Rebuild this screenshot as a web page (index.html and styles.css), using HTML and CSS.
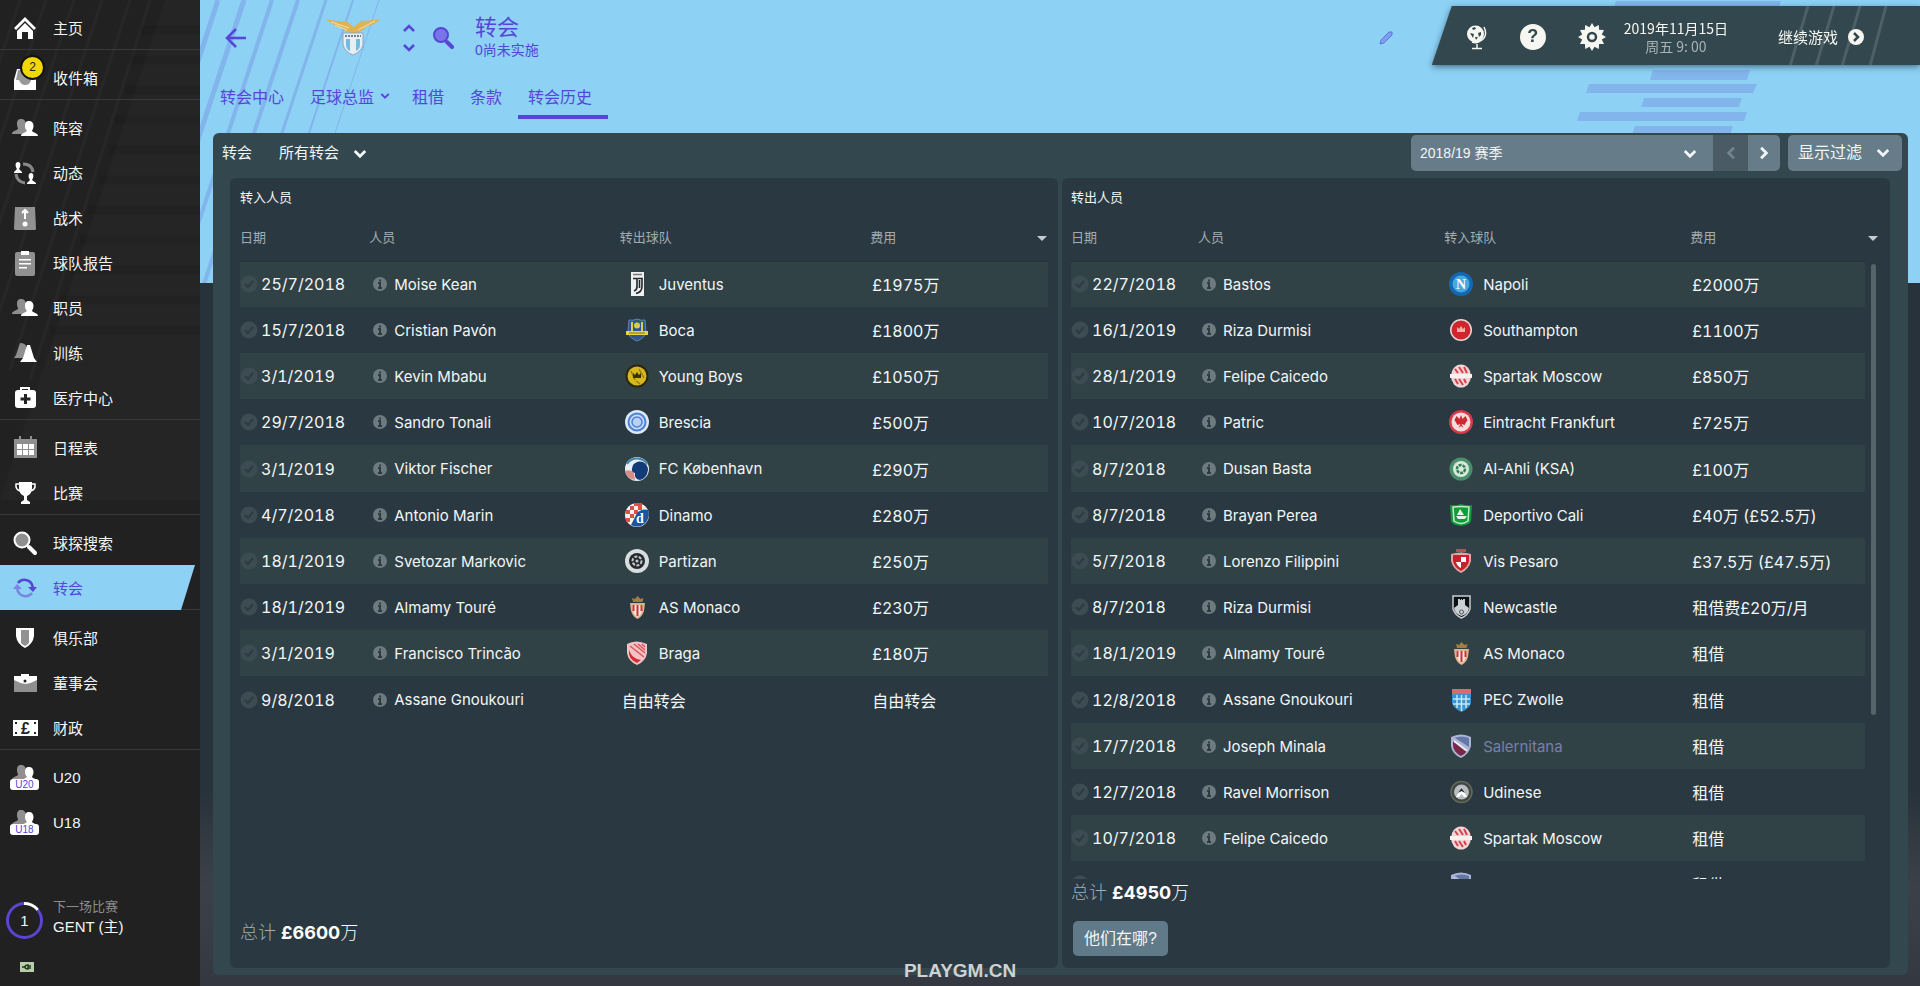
FILE: index.html
```html
<!DOCTYPE html>
<html lang="zh-CN">
<head>
    <meta charset="UTF-8">
    <meta name="viewport" content="width=device-width, initial-scale=1.0">
    <title>转会历史</title>
    <link rel="stylesheet" href="styles.css">
</head>
<body>
    <!-- Shared icons and club badges -->
    <svg class="sprite" aria-hidden="true">
        <symbol id="chevron" viewBox="0 0 12 12"><path d="M1.500 3.500 6 8l4.500-4.500" fill="none" stroke="currentColor" stroke-width="2.400"/></symbol>
        <symbol id="people" viewBox="0 0 28 28">
            <path d="M10 5c-3 0-4 2-4 5s1 3 1 5c-3 2-6 2-6 5h14V10c0-3-2-5-5-5z" fill="#8f8f8f"/>
            <path d="M18 7c3 0 4.500 2 4.500 5s-1.500 4-1.500 5c2 2 6 2 6 5H10c0-3 4-3 5.500-5 0-1-1.500-2-1.500-5s1-5 4-5z" fill="#fff"/>
        </symbol>
        <symbol id="check" viewBox="0 0 18 18"><circle cx="9" cy="9" r="8.500" fill="#3d4c52"/><path d="m5 9 3 3 5-6" fill="none" stroke="#2e3b41" stroke-width="2"/></symbol>
        <symbol id="info" viewBox="0 0 14 14"><circle cx="7" cy="7" r="7" fill="#6d7a80"/><path d="M7 2.500v2M5 6h2v5M5 11h4" fill="none" stroke="#2d3b42" stroke-width="2"/></symbol>

        <symbol id="juventus" viewBox="0 0 24 24"><path d="M6 0h13v24H6z" fill="#eef1f1"/><path d="M8 2.500h9" stroke="#777" stroke-width="1.500"/><path d="M8 6.500h4v8c0 3-1 4-3 4.500M13 6.500h4v8c0 4-2 6-6 7M14.500 8v8" fill="none" stroke="#20262a" stroke-width="1.600"/></symbol>
        <symbol id="boca" viewBox="0 0 24 24"><path d="M4 2q4 1 8-1 4 2 8 1l1 12q-1 6-9 9-8-3-9-9z" fill="#31558f" stroke="#6288a8"/><path d="M7 4v9M17 4v9" stroke="#d7cf44" stroke-width="2"/><circle cx="12" cy="7.500" r="3" fill="#d7cf44"/><path d="M1 13h22v4H1z" fill="#e4d745"/><path d="M4 15h16" stroke="#77752b"/></symbol>
        <symbol id="youngboys" viewBox="0 0 24 24"><circle cx="12" cy="12" r="11.500" fill="#2c260d"/><circle cx="12" cy="12" r="9.500" fill="#d8b81c"/><path d="m6 7 4 9M14 5l5 9M11 17l4 3" stroke="#93801a" stroke-width="1.500"/><path d="m8 9 2 2 2-3 2 3 2-2v5H8z" fill="#3a320d"/></symbol>
        <symbol id="brescia" viewBox="0 0 24 24"><circle cx="12" cy="12" r="12" fill="#dce9f9"/><circle cx="12" cy="12" r="8.500" fill="#c4daf8" stroke="#4f82d4" stroke-width="2"/><circle cx="12" cy="12" r="5" fill="#b9d2f4" stroke="#4f82d4" stroke-width="1.500"/></symbol>
        <symbol id="kobenhavn" viewBox="0 0 24 24"><circle cx="12" cy="12" r="12" fill="#e7eff4"/><path d="M2 7Q6 1 13 1.500q7 1 9 6" fill="none" stroke="#3f82ad" stroke-width="2"/><path d="M8 8q4-5 10-3 5 3 5 8-1 8-8 10-6-1-5-7-5 0-2-8z" fill="#123c78"/><path d="M0 14q6-2 9 2l1 7q-8-1-10-9z" fill="#d98c8a"/></symbol>
        <symbol id="dinamo" viewBox="0 0 24 24"><circle cx="12" cy="12" r="12" fill="#f5f1ee"/><path d="M5 3h4v4H5zM13 0h4v3h-4zM9 7h4v4H9zM1 7h4v4H1zM13 3h4v4h-4zM5 11h4v4H5zM1 15h4v4H1zM17 7h4v4h-4zM9 0h4v3H9z" fill="#de4f44"/><path d="M23 7a12 12 0 0 1-17 15l6-12q5-5 11-3z" fill="#1b559e"/><text x="11" y="19.500" class="badge-letter" fill="#fff">d</text></symbol>
        <symbol id="partizan" viewBox="0 0 24 24"><circle cx="12" cy="12" r="12" fill="#d9dddf"/><circle cx="12" cy="12" r="8" fill="#24292c"/><circle cx="12" cy="12" r="4.500" fill="none" stroke="#c5cccf" stroke-width="2" stroke-dasharray="3 1.500"/><circle cx="12" cy="12" r="1.500" fill="#c5cccf"/></symbol>
        <symbol id="monaco" viewBox="0 0 24 24"><path d="m8 7-1-4 3 1 2.500-3 3 3 3-1-1 4z" fill="#a67c43"/><path d="M5 8h15l-1 8q-2 6-6.500 8Q8 22 6 16z" fill="#dfb28c"/><path d="M7 10h11l-1 6q-1 4-4.500 6Q9 20 8 16z" fill="#f6e7df"/><path d="M8.500 10v6M12.500 10v11M16.500 10v6" stroke="#c7333c" stroke-width="2"/></symbol>
        <symbol id="braga" viewBox="0 0 24 24"><path d="M2 3q9-5 20 0v9q-1 8-10 12Q3 20 2 12z" fill="#f2c3c5"/><path d="M4 9q3 9 12 10l-4 3q-7-3-8-9z" fill="#d92b32"/><path d="m9 3 11 9M13 3l7 6M17 3l3 3M5 5l14 11" stroke="#dd5158" stroke-width="1.500"/></symbol>
        <symbol id="napoli" viewBox="0 0 24 24"><circle cx="12" cy="12" r="12" fill="#1368b4"/><circle cx="12" cy="12" r="8.500" fill="#4ba8de"/><text x="7" y="16.500" class="badge-letter" fill="#fff">N</text></symbol>
        <symbol id="southampton" viewBox="0 0 24 24"><circle cx="12" cy="12" r="11" fill="#f0d5d5"/><circle cx="12" cy="12" r="9.500" fill="#cf252d"/><path d="m8 9 2 2 2-3 2 3 2-2v5H8z" fill="#f3b0a4"/></symbol>
        <symbol id="spartak" viewBox="0 0 24 24"><ellipse cx="12" cy="12" rx="10" ry="11.500" fill="#f2d5d7"/><path d="m6 5 3 4M10 3l4 6M15 3l3 6M6 15l3 5M10 15l4 6M15 15l2 4" stroke="#d4434d" stroke-width="2"/><path d="M1 10h22v4H1z" fill="#faf0ed"/></symbol>
        <symbol id="frankfurt" viewBox="0 0 24 24"><circle cx="12" cy="12" r="12" fill="#d83a46"/><circle cx="12" cy="12" r="9.500" fill="#f5dddd"/><path d="m12 5 1.500 4 3-3 2 4-3 5-3-1 2 4-2.500-2-2.500 2 2-4-3 1-3-5 2-4 3 3z" fill="#cf2631"/></symbol>
        <symbol id="ahli" viewBox="0 0 24 24"><circle cx="12" cy="12" r="11.500" fill="#4a8f6d"/><circle cx="12" cy="12" r="8" fill="#d5ead9"/><circle cx="12" cy="12" r="4" fill="#d5ead9" stroke="#377a5a" stroke-width="2.500" stroke-dasharray="3 1"/></symbol>
        <symbol id="cali" viewBox="0 0 24 24"><path d="M1 2q5 1 11-1 6 2 11 1l-1 16q-1 4-10 5-9-1-10-5z" fill="#129a3b"/><path d="M4 4q8-1 16 0l-1 14q-7 5-14 0z" fill="none" stroke="#c5eccb" stroke-width="1.500"/><path d="M7 13h11l-2 3H9zM11 6l4 6H8z" fill="#e2f5e2"/></symbol>
        <symbol id="pesaro" viewBox="0 0 24 24"><path d="M7 0h10v3H7z" fill="#b35358"/><path d="M2 5q10-3 20 0v7q-2 8-10 12Q4 20 2 12z" fill="#e7a3a6"/><path d="M4 6h16v6q-1 6-8 10-7-4-8-10z" fill="#c9212b"/><path d="M12 8h5v5h-5zM7 13h5v6q-4-2-5-6z" fill="#fff"/></symbol>
        <symbol id="newcastle" viewBox="0 0 24 24"><path d="M4 1h17v13q-2 6-8.500 9Q6 20 4 14z" fill="#0d1114" stroke="#c9cdd0" stroke-width="1.500"/><path d="M9 4h2v1h1V4h1v1h1V4h2v6l4 3q-1 6-7.500 8Q6 19 5 13l4-3z" fill="#cbd0d4"/><circle cx="12.500" cy="17" r="2" fill="none" stroke="#555"/></symbol>
        <symbol id="zwolle" viewBox="0 0 24 24"><path d="M3 1h19v14q-2 6-9.500 9Q5 21 3 15z" fill="#3a93cf"/><path d="M3 1h19v5H3z" fill="#d96b6c"/><path d="M8 7v13M12.500 7v16M17 7v13M4 11h17M4 16h17" stroke="#c4e6f5" stroke-width="1.500"/></symbol>
        <symbol id="salernitana" viewBox="0 0 24 24"><path d="M2 3q10-5 20 0v9q-2 8-10 12Q3 20 2 12z" fill="#aeb4d8"/><path d="M5 4q8-3 15 0v9L6 4z" fill="#6378a5"/><path d="M4 7l14 10q-2 3-6 5-8-4-8-11z" fill="#792848"/><path d="m5 7 13 10" stroke="#eeeef6" stroke-width="2"/></symbol>
        <symbol id="udinese" viewBox="0 0 24 24"><circle cx="12.500" cy="12" r="10.500" fill="#3e4642" stroke="#66685a" stroke-width="1.500"/><circle cx="12.500" cy="12" r="7.500" fill="#b8bdbf"/><path d="m7 17 5.500-10L18 17h-3l-2.500-3-2.500 3z" fill="#fff"/><path d="m9 13 3.500-5 3.500 5-3.500-2z" fill="#1b2023"/></symbol>
    </svg>

    <aside class="sidebar">
        <svg class="sidebar-art" viewBox="0 0 200 500" aria-hidden="true">
            <path d="M165 0h35v500H0z" fill="#fff" opacity=".02"/>
            <path d="M20 0-20 120M46 0-40 260M74 0-30 310M102 0-10 340M130 0 10 370M150 0 30 380" stroke="#fff" stroke-width="3" opacity=".025"/>
            <path d="M140 30h60M130 60h70M125 90h75M115 120h85M108 150h92M98 180h102M88 210h112M80 240h120M70 270h130M60 300h140M50 330h150" stroke="#000" stroke-width="9" opacity=".06"/>
        </svg>
        <nav class="menu">
            <div class="menu-group">
                <a href="#" class="menu-item">
                    <svg viewBox="0 0 28 28"><path d="M14 3 3 14l2 2 9-9 9 9 2-2z" fill="#fff"/><path d="m14 9-8 8v8h5v-7h6v7h5v-8z" fill="#fff"/></svg>
                    <span>主页</span>
                </a>
            </div>
            <div class="menu-group">
                <a href="#" class="menu-item">
                    <svg viewBox="0 0 28 28"><path d="m6 5-3 11v10h22V16L22 5z" fill="#fff"/><path d="m7 6-2 10h3q2 5 6 5 5 0 6-5V6z" fill="#999"/></svg>
                    <span class="inbox-badge">2</span>
                    <span>收件箱</span>
                </a>
            </div>
            <div class="menu-group">
                <a href="#" class="menu-item"><svg viewBox="0 0 28 28"><use href="#people"/></svg><span>阵容</span></a>
                <a href="#" class="menu-item">
                    <svg viewBox="0 0 28 28"><path d="M12 5q9 0 10 8M5 15q1 8 9 9" fill="none" stroke="#888" stroke-width="3"/><path d="M7 3c3 0 3 4 1 7l3 3v1H3v-1l3-3C4 7 4 3 7 3zM20 14c3 0 3 4 1 7l4 3v1h-9v-1l3-3c-2-3-2-7 1-7z" fill="#fff"/></svg>
                    <span>动态</span>
                </a>
                <a href="#" class="menu-item">
                    <svg viewBox="0 0 28 28"><path d="M4 3h20l1 22-1 1H4l-1-1z" fill="#919191"/><path d="M14 6v9M11 9l3-3 3 3" fill="none" stroke="#fff" stroke-width="2"/><circle cx="14" cy="20" r="2.500" fill="#fff"/></svg>
                    <span>战术</span>
                </a>
                <a href="#" class="menu-item">
                    <svg viewBox="0 0 28 28"><rect x="4" y="3" width="20" height="24" rx="2" fill="#919191"/><path d="M10 2h8v4h-8zM8 10h12v1.500H8zM8 14h12v1.500H8zM8 18h8v1.500H8z" fill="#fff"/></svg>
                    <span>球队报告</span>
                </a>
                <a href="#" class="menu-item"><svg viewBox="0 0 28 28"><use href="#people"/></svg><span>职员</span></a>
                <a href="#" class="menu-item">
                    <svg viewBox="0 0 28 28"><path d="m9 4-4 12-2 3h12V7q-1-3-6-3z" fill="#8f8f8f"/><path d="M16 6h3l4 13 3 4H9l3-4z" fill="#fff"/></svg>
                    <span>训练</span>
                </a>
                <a href="#" class="menu-item">
                    <svg viewBox="0 0 28 28"><path d="M10 7V4h8v3" fill="none" stroke="#fff" stroke-width="2"/><rect x="4" y="6" width="21" height="18" rx="3" fill="#fff"/><path d="M14.500 10v10M9.500 15h10" stroke="#222" stroke-width="3"/></svg>
                    <span>医疗中心</span>
                </a>
            </div>
            <div class="menu-group">
                <a href="#" class="menu-item">
                    <svg viewBox="0 0 28 28"><path d="M3 5h23v19H3zM8 2h2v4H8zM19 2h2v4h-2z" fill="#8f8f8f"/><path d="M6 10h5v5H6zM12 10h5v5h-5zM18 10h5v5h-5zM6 16h5v5H6zM12 16h5v5h-5zM18 16h5v5h-5z" fill="#fff"/></svg>
                    <span>日程表</span>
                </a>
                <a href="#" class="menu-item">
                    <svg viewBox="0 0 28 28"><path d="M8 3h13v6q0 6-5 8v4l3 2v2H10v-2l3-2v-4q-5-2-5-8z" fill="#fff"/><path d="M8 5H5q-1 6 5 7M21 5h3q1 6-5 7" fill="none" stroke="#fff" stroke-width="1.500"/></svg>
                    <span>比赛</span>
                </a>
            </div>
            <div class="menu-group flush">
                <a href="#" class="menu-item">
                    <svg viewBox="0 0 28 28"><circle cx="11" cy="11" r="7.500" fill="#8f8f8f" stroke="#fff" stroke-width="2"/><path d="m18 18 6 6" stroke="#fff" stroke-width="4" stroke-linecap="round"/></svg>
                    <span>球探搜索</span>
                </a>
                <a href="#" class="menu-item active">
                    <svg viewBox="0 0 28 28"><path d="M7 9q3-4 8-3 6 1 7 8" fill="none" stroke="#5546d8" stroke-width="2.500"/><path d="M17 13h9l-4 5z" fill="#5546d8"/><path d="M21 19q-3 4-8 3-6-1-7-8" fill="none" stroke="#7a86e4" stroke-width="2.500"/><path d="M2 15h9l-5-5z" fill="#7a86e4"/></svg>
                    <span>转会</span>
                </a>
            </div>
            <div class="menu-group">
                <a href="#" class="menu-item">
                    <svg viewBox="0 0 28 28"><path d="M5 4h18v8q-1 8-9 12-8-4-9-12z" fill="#fff"/><path d="M10 6h8v13q-2 2-4 3-2-1-4-3z" fill="#919191"/></svg>
                    <span>俱乐部</span>
                </a>
                <a href="#" class="menu-item">
                    <svg viewBox="0 0 28 28"><path d="M3 10h23v13H3z" fill="#8f8f8f"/><path d="M3 7h7V5h8v2h8v4q-5 3-11.500 4Q8 14 3 11z" fill="#fff"/><circle cx="14" cy="12" r="1.500" fill="#222"/></svg>
                    <span>董事会</span>
                </a>
                <a href="#" class="menu-item">
                    <svg viewBox="0 0 28 28"><path d="M2 6h25v16H2z" fill="#fff"/><path d="M4 8h2v2H4zM23 8h2v2h-2zM4 18h2v2H4zM23 18h2v2h-2z" fill="#222"/><text x="10" y="20" class="pound">£</text></svg>
                    <span>财政</span>
                </a>
            </div>
            <div class="menu-group last">
                <a href="#" class="menu-item"><svg viewBox="0 0 28 28"><use href="#people" y="-4"/></svg><span class="age-tag">U20</span><span>U20</span></a>
                <a href="#" class="menu-item"><svg viewBox="0 0 28 28"><use href="#people" y="-4"/></svg><span class="age-tag">U18</span><span>U18</span></a>
            </div>
        </nav>
        <a href="#" class="next-match">
            <span class="countdown">1</span>
            <span>
                <span class="next-label">下一场比赛</span>
                <span class="next-team">GENT (主)</span>
            </span>
        </a>
        <svg class="power" viewBox="0 0 14 10" aria-hidden="true"><path d="M0 0h14v10H0z" fill="#b6cfa9"/><path d="M2 5h3M5 5q0-2 3-2v4Q5 7 5 5M8 4h3M8 6h3" fill="none" stroke="#26371f" stroke-width="1.500"/></svg>
    </aside>

    <main class="main">
        <div class="header-art" aria-hidden="true">
            <svg class="lines" viewBox="0 0 180 283">
                <g stroke="#82b5ec" fill="none">
                    <path d="M18 0-10 86" stroke-width="5"/>
                    <path d="M44 0-10 164" stroke-width="5"/>
                    <path d="M72 0-20 279" stroke-width="4"/>
                    <path d="M98 0 4 284" stroke-width="4"/>
                    <path d="M126 0 32 284" stroke-width="3"/>
                    <path d="M153 0 59 284" stroke-width="2"/>
                    <path d="M179 0 85 284" stroke-width="1"/>
                </g>
            </svg>
            <svg class="stripes" viewBox="0 0 220 140">
                <path d="M46 1h165l-2 6H44zM83 70h97l-3 10H80zM19 84h168l-4 9H16zM74 98h98l-3 9H71zM10 112h167l-3 9H7zM65 126h98l-3 9H62z" fill="#82b5ec"/>
            </svg>
        </div>

        <header class="top">
            <button class="icon-button back" aria-label="返回"><svg viewBox="0 0 22 22"><path d="M21 11H3M11 2 2 11l9 9" fill="none" stroke="currentColor" stroke-width="2.500"/></svg></button>
            <svg class="club-logo" viewBox="0 0 54 40" aria-hidden="true">
                <path d="M0 1q12 3 20 2l8 6 7-6Q44 3 54 1q-5 6-13 7-6 6-10 7l-4 1-8-3-2-3-6-1Q4 5 0 1z" fill="#dfb253"/>
                <path d="M5 4q10 3 18 6M49 3q-8 4-17 9M9 7l12 5" fill="none" stroke="#f6e3a8"/>
                <path d="M17 15h20v12q-2 7-10 10-8-3-10-10z" fill="#e8eef2" stroke="#8ba6bc"/>
                <path d="M20 21h4v12q-4-2-4-6zM30 21h4v6q0 4-4 6z" fill="#73bbe0"/>
                <path d="M19 18h16" stroke="#6e8396" stroke-width="2" stroke-dasharray="2 1"/>
            </svg>
            <div class="stepper">
                <button class="icon-button" aria-label="上一个"><svg viewBox="0 0 12 12"><path d="m1 9 5-5 5 5" fill="none" stroke="currentColor" stroke-width="2.500"/></svg></button>
                <button class="icon-button" aria-label="下一个"><svg viewBox="0 0 12 12"><path d="m1 3 5 5 5-5" fill="none" stroke="currentColor" stroke-width="2.500"/></svg></button>
            </div>
            <button class="icon-button search" aria-label="搜索"><svg viewBox="0 0 22 22"><circle cx="9" cy="8" r="7" fill="#7a75e6" stroke="currentColor" stroke-width="2"/><path d="m15 15 5 5" stroke="currentColor" stroke-width="4" stroke-linecap="round"/></svg></button>
            <div class="title">
                <h1>转会</h1>
                <p>0尚未实施</p>
            </div>
            <button class="icon-button edit" aria-label="编辑"><svg viewBox="0 0 14 14"><path d="m1 13 1-4 8-8 3 0 0 3-8 8z" fill="#7d9fec" stroke="#6172dc"/></svg></button>
            <div class="status-shadow">
                <div class="status">
                    <svg class="status-lines" viewBox="0 0 120 60" aria-hidden="true"><path d="M28 0 10 60M54 0 36 60M80 0 62 60M106 0 90 60" stroke="#4e6067" stroke-width="3"/></svg>
                    <button class="icon-button globe" aria-label="世界"><svg viewBox="0 0 22 26"><circle cx="9.500" cy="10" r="8.500" fill="#f6f7f0"/><path d="m6 4 3-1 1 2-3 1zM12 9l3-1 0 3-2 2zM4 9l4 1-1 4zM9 13l3 0-2 3z" fill="#33474f"/><path d="M18 3q4 8-2 13-5 4-10 2M11 20v4M6 24.500h10" fill="none" stroke="#f6f7f0" stroke-width="1.500"/></svg></button>
                    <button class="help" aria-label="帮助">?</button>
                    <button class="icon-button gear" aria-label="设置">
                        <svg viewBox="0 0 28 28"><path d="m14 0 2.500 4.200 4.300-2.300.300 4.900 4.900.300-2.200 4.300L28 14l-4.200 2.600L26 20.900l-4.900.200-.300 5-4.300-2.300L14 28l-2.500-4.200-4.300 2.300-.300-5-4.900-.200 2.200-4.300L0 14l4.200-2.600L2 7.100l4.900-.300.300-4.900 4.300 2.300z" fill="#f6f7f0"/><circle cx="14" cy="14" r="4" fill="none" stroke="#33474f" stroke-width="2.500"/></svg>
                    </button>
                    <div class="date">
                        <div>2019年11月15日</div>
                        <div class="time">周五 9: 00</div>
                    </div>
                    <button class="continue">继续游戏 <svg viewBox="0 0 16 16"><circle cx="8" cy="8" r="8" fill="#f6f7f0"/><path d="m6 4 4 4-4 4" fill="none" stroke="#33474f" stroke-width="2.500"/></svg></button>
                </div>
            </div>
        </header>

        <nav class="tabs">
            <a href="#">转会中心</a>
            <a href="#">足球总监<svg viewBox="0 0 12 12"><use href="#chevron"/></svg></a>
            <a href="#">租借</a>
            <a href="#">条款</a>
            <a href="#" class="active">转会历史</a>
        </nav>

        <section class="panel">
            <div class="toolbar">
                <label for="view">转会</label>
                <div class="select view">
                    <select id="view"><option>所有转会</option></select>
                    <svg viewBox="0 0 12 12"><use href="#chevron"/></svg>
                </div>
                <div class="season-group">
                    <div class="select season">
                        <select id="season" aria-label="赛季"><option>2018/19 赛季</option></select>
                        <svg viewBox="0 0 12 12"><use href="#chevron"/></svg>
                    </div>
                    <button class="step prev" aria-label="上赛季" disabled><svg viewBox="0 0 12 12"><use href="#chevron"/></svg></button>
                    <button class="step next" aria-label="下赛季"><svg viewBox="0 0 12 12"><use href="#chevron"/></svg></button>
                </div>
                <button class="filter">显示过滤 <svg viewBox="0 0 12 12"><use href="#chevron"/></svg></button>
            </div>

            <div class="cards">
                <section class="card">
                    <h2>转入人员</h2>
                    <div class="list">
                        <table>
                            <thead>
                                <tr><th class="col-date">日期</th><th class="col-person">人员</th><th class="col-team">转出球队</th><th class="col-fee">费用<i class="sort"></i></th></tr>
                            </thead>
                            <tbody id="transfers-in"></tbody>
                        </table>
                    </div>
                    <p class="total">总计 <b>£6600</b><span>万</span></p>
                </section>
                <section class="card card-out">
                    <h2>转出人员</h2>
                    <div class="list">
                        <table>
                            <thead>
                                <tr><th class="col-date">日期</th><th class="col-person">人员</th><th class="col-team">转入球队</th><th class="col-fee">费用<i class="sort"></i></th></tr>
                            </thead>
                            <tbody id="transfers-out"></tbody>
                        </table>
                        <div class="scroll-thumb"></div>
                    </div>
                    <p class="total">总计 <b>£4950</b><span>万</span></p>
                    <button class="where">他们在哪?</button>
                </section>
            </div>
        </section>
        <div class="watermark">PLAYGM.CN</div>
    </main>

    <script>
        // date, player, badge, team, fee
        const transfersIn = [
            ['25/7/2018', 'Moise Kean', 'juventus', 'Juventus', '£1975万'],
            ['15/7/2018', 'Cristian Pavón', 'boca', 'Boca', '£1800万'],
            ['3/1/2019', 'Kevin Mbabu', 'youngboys', 'Young Boys', '£1050万'],
            ['29/7/2018', 'Sandro Tonali', 'brescia', 'Brescia', '£500万'],
            ['3/1/2019', 'Viktor Fischer', 'kobenhavn', 'FC København', '£290万'],
            ['4/7/2018', 'Antonio Marin', 'dinamo', 'Dinamo', '£280万'],
            ['18/1/2019', 'Svetozar Markovic', 'partizan', 'Partizan', '£250万'],
            ['18/1/2019', 'Almamy Touré', 'monaco', 'AS Monaco', '£230万'],
            ['3/1/2019', 'Francisco Trincão', 'braga', 'Braga', '£180万'],
            ['9/8/2018', 'Assane Gnoukouri', '', '自由转会', '自由转会']
        ];

        const transfersOut = [
            ['22/7/2018', 'Bastos', 'napoli', 'Napoli', '£2000万'],
            ['16/1/2019', 'Riza Durmisi', 'southampton', 'Southampton', '£1100万'],
            ['28/1/2019', 'Felipe Caicedo', 'spartak', 'Spartak Moscow', '£850万'],
            ['10/7/2018', 'Patric', 'frankfurt', 'Eintracht Frankfurt', '£725万'],
            ['8/7/2018', 'Dusan Basta', 'ahli', 'Al-Ahli (KSA)', '£100万'],
            ['8/7/2018', 'Brayan Perea', 'cali', 'Deportivo Cali', '£40万 (£52.5万)'],
            ['5/7/2018', 'Lorenzo Filippini', 'pesaro', 'Vis Pesaro', '£37.5万 (£47.5万)'],
            ['8/7/2018', 'Riza Durmisi', 'newcastle', 'Newcastle', '租借费£20万/月'],
            ['18/1/2019', 'Almamy Touré', 'monaco', 'AS Monaco', '租借'],
            ['12/8/2018', 'Assane Gnoukouri', 'zwolle', 'PEC Zwolle', '租借'],
            ['17/7/2018', 'Joseph Minala', 'salernitana', 'Salernitana', '租借'],
            ['12/7/2018', 'Ravel Morrison', 'udinese', 'Udinese', '租借'],
            ['10/7/2018', 'Felipe Caicedo', 'spartak', 'Spartak Moscow', '租借'],
            ['', '', 'salernitana', '', '租借']
        ];

        function icon(name, cls) {
            return `<svg class="${cls}" aria-hidden="true"><use href="#${name}"/></svg>`;
        }

        // Club with badge, or plain text when there is no club
        function teamCell(badge, team) {
            if (!badge) return `<div class="cell no-team">${team}</div>`;
            const cls = team === 'Salernitana' ? 'affiliate' : '';
            return `<div class="cell team-cell">${icon(badge, 'badge')}<span class="${cls}">${team}</span></div>`;
        }

        // Fill one transfer table
        function renderRows(id, rows) {
            document.getElementById(id).innerHTML = rows.map(([date, player, badge, team, fee]) => `
                <tr>
                    <td><div class="cell date-cell">${icon('check', 'check')}${date}</div></td>
                    <td><div class="cell person-cell">${player ? icon('info', 'info') : ''}${player}</div></td>
                    <td>${teamCell(badge, team)}</td>
                    <td><div class="cell fee-cell">${fee}</div></td>
                </tr>`).join('');
        }

        renderRows('transfers-in', transfersIn);
        renderRows('transfers-out', transfersOut);
    </script>
</body>
</html>
```
FILE: styles.css
```css
* {
    box-sizing: border-box;
    margin: 0;
    padding: 0;
}

body {
    display: flex;
    height: 100vh;
    overflow: hidden;
    background: #28323b;
    color: #f3f6f6;
    font-family: "Liberation Sans", "Noto Sans CJK SC", sans-serif;
    font-size: 15px;
}

a {
    color: inherit;
    text-decoration: none;
}

button,
select {
    border: none;
    background: none;
    color: inherit;
    font: inherit;
    cursor: pointer;
}

svg {
    display: block;
    flex: none;
}

.sprite {
    display: none;
}

/* Sidebar */
.sidebar {
    position: relative;
    display: flex;
    flex: none;
    flex-direction: column;
    width: 200px;
    background: #212121;
}

.sidebar-art {
    position: absolute;
    top: 0;
    left: 0;
    width: 200px;
    height: 500px;
}

.menu {
    position: relative;
}

.menu-group {
    padding-top: 5px;
    box-shadow: inset 0 -1px #393939;
}

.menu-group.last {
    box-shadow: none;
}

.menu-item {
    position: relative;
    display: flex;
    align-items: center;
    gap: 14px;
    height: 45px;
    padding-left: 11px;
}

.menu-item svg {
    width: 28px;
    height: 28px;
}

.menu-item.active {
    background: #8dd1f5;
    color: #5546d8;
    clip-path: polygon(0 0, 195px 0, 181px 100%, 0 100%);
}

.inbox-badge {
    position: absolute;
    top: 0;
    left: 20px;
    width: 25px;
    height: 25px;
    border: 2px solid #111;
    border-radius: 50%;
    background: #f0d800;
    color: #222;
    font-size: 12px;
    line-height: 21px;
    text-align: center;
}

.age-tag {
    position: absolute;
    top: 24px;
    left: 10px;
    width: 29px;
    height: 11px;
    border-radius: 3px;
    background: #fff;
    color: #5546d8;
    font-size: 10px;
    line-height: 11px;
    text-align: center;
}

.pound {
    fill: #222;
    font-size: 16px;
    font-weight: bold;
}

.next-match {
    position: relative;
    display: flex;
    align-items: flex-start;
    gap: 10px;
    margin: auto 0 23px 6px;
}

.countdown {
    width: 37px;
    height: 37px;
    margin-top: 5px;
    border-radius: 50%;
    background: radial-gradient(circle, #212121 0 15px, transparent 16px), conic-gradient(#fff 0 14%, #5b44d6 14%);
    line-height: 37px;
    text-align: center;
}

.next-label,
.next-team {
    display: block;
    line-height: 20px;
}

.next-label {
    color: #8c8c8c;
    font-size: 13px;
}

.power {
    width: 14px;
    height: 10px;
    margin: 0 0 14px 20px;
}

/* Header */
.main {
    position: relative;
    display: flex;
    flex: 1;
    flex-direction: column;
    min-width: 0;
    background: linear-gradient(#28323b 0 80%, #3c4149 90%, #343941);
}

.header-art {
    position: absolute;
    top: 0;
    left: 0;
    right: 0;
    height: 283px;
    overflow: hidden;
    background: #8dd1f5;
}

.lines {
    width: 180px;
    height: 283px;
}

.stripes {
    position: absolute;
    top: 0;
    right: 130px;
    width: 220px;
    height: 140px;
}

.top {
    position: relative;
    display: flex;
    align-items: center;
    height: 75px;
    padding-left: 25px;
    color: #5546d8;
}

.icon-button svg {
    width: 100%;
    height: 100%;
}

.back,
.search {
    width: 22px;
    height: 22px;
}

.club-logo {
    width: 54px;
    height: 40px;
    margin: 0 23px 0 79px;
}

.stepper {
    display: grid;
    gap: 8px;
    width: 12px;
}

.stepper button {
    height: 12px;
}

.search {
    margin: 0 21px 0 17px;
}

.title h1 {
    font-size: 22px;
    font-weight: normal;
    line-height: 24px;
}

.title p {
    font-size: 14px;
    line-height: 20px;
}

.edit {
    width: 14px;
    height: 14px;
    margin: 0 39px 0 auto;
}

.status-shadow {
    align-self: flex-start;
    margin-top: 6px;
    filter: drop-shadow(0 2px 3px rgba(20, 50, 70, 0.6));
}

.status {
    position: relative;
    display: flex;
    align-items: center;
    height: 59px;
    padding: 2px 56px 0 34px;
    background: #33474f;
    color: #f6f7f0;
    clip-path: polygon(20px 0, 100% 0, 100% 100%, 0 100%);
}

.status-lines {
    position: absolute;
    top: 0;
    right: 20px;
    width: 120px;
    height: 60px;
}

.globe {
    width: 22px;
    height: 26px;
}

.help {
    width: 26px;
    height: 26px;
    margin: 0 32px;
    border-radius: 50%;
    background: #f6f7f0;
    color: #33474f;
    font-size: 18px;
    font-weight: bold;
}

.gear {
    width: 28px;
    height: 28px;
}

.date {
    margin: 0 50px 0 18px;
    font-family: "Noto Sans CJK SC", sans-serif;
    font-size: 14px;
    line-height: 18px;
    text-align: center;
}

.time {
    color: #a9b3b6;
}

.continue {
    position: relative;
    display: flex;
    align-items: center;
    gap: 10px;
}

.continue svg {
    width: 16px;
    height: 16px;
}

.tabs {
    position: relative;
    display: flex;
    height: 44px;
    margin-bottom: 14px;
    padding-left: 10px;
    color: #5546d8;
    font-size: 16px;
}

.tabs a {
    display: flex;
    align-items: center;
    gap: 6px;
    padding: 0 16px 2px 10px;
}

.tabs svg {
    width: 10px;
    height: 10px;
    margin-right: -4px;
}

.tabs .active {
    box-shadow: inset 0 -4px #5546d8;
}

/* Panel */
.panel {
    position: relative;
    display: flex;
    flex: 1;
    flex-direction: column;
    min-height: 0;
    margin: 0 12px 11px 13px;
    padding: 0 18px 7px 17px;
    border-radius: 6px;
    background: #33474f;
}

.toolbar {
    display: flex;
    height: 45px;
    margin: 0 -12px 0 -8px;
    padding-top: 2px;
    line-height: 36px;
}

.select {
    position: relative;
}

.select select {
    width: 100%;
    height: 36px;
    appearance: none;
}

.select svg {
    position: absolute;
    top: 12px;
    right: 16px;
    pointer-events: none;
}

.toolbar svg {
    width: 14px;
    height: 14px;
}

.view {
    width: 104px;
    margin: 0 auto 0 27px;
}

.season-group {
    display: flex;
    height: 36px;
    margin-right: 8px;
    overflow: hidden;
    border-radius: 5px;
    background: #667c89;
}

.season {
    width: 302px;
    font-size: 14px;
}

.season select {
    padding-left: 9px;
}

.step {
    display: flex;
    align-items: center;
    justify-content: center;
    width: 32px;
}

.prev {
    width: 35px;
    background: #4b5b65;
    color: #75828a;
}

.prev svg {
    transform: rotate(90deg);
}

.next svg {
    transform: rotate(-90deg);
}

.filter {
    display: flex;
    align-items: center;
    gap: 14px;
    width: 114px;
    height: 36px;
    padding-left: 10px;
    border-radius: 5px;
    background: #667c89;
    font-size: 16px;
}

.cards {
    display: grid;
    flex: 1;
    grid-template-columns: 1fr 1fr;
    gap: 4px;
    min-height: 0;
}

.card {
    display: flex;
    flex-direction: column;
    min-height: 0;
    padding: 8px 10px 11px;
    border-radius: 6px;
    background: #2a3941;
}

.card-out {
    padding-left: 9px;
}

.card h2 {
    margin-bottom: 6px;
    font-size: 13px;
    font-weight: normal;
    line-height: 24px;
}

.list {
    position: relative;
    flex: 1;
    min-height: 0;
    overflow: hidden;
}

.card-out table {
    width: calc(100% - 15px);
}

table {
    width: 100%;
    border-collapse: collapse;
    table-layout: fixed;
    font-family: Inter, "Noto Sans CJK SC", sans-serif;
}

th {
    position: relative;
    height: 45px;
    padding-bottom: 3px;
    border-bottom: 1px solid #25323a;
    color: #a3adb1;
    font-size: 13px;
    font-weight: normal;
    text-align: left;
}

.col-date {
    width: 16%;
}

.col-person,
.col-team {
    width: 31%;
}

.col-fee {
    width: 22%;
}

.sort {
    position: absolute;
    top: 20px;
    right: 1px;
    border: 5px solid transparent;
    border-top-color: #c5cccf;
    border-bottom: none;
}

.card-out .sort {
    right: -13px;
}

tbody tr:nth-child(odd) {
    background: #314247;
}

td {
    height: 46px;
    white-space: nowrap;
}

tr:nth-child(5n) td {
    height: 47px;
}

.cell {
    display: flex;
    align-items: center;
}

.date-cell {
    gap: 3px;
    font-size: 16px;
    font-variant-numeric: tabular-nums;
}

.person-cell {
    gap: 7px;
    padding-left: 4px;
}

.team-cell {
    gap: 10px;
    padding-left: 5px;
}

.no-team,
.fee-cell {
    padding-left: 2px;
    font-size: 16px;
    font-variant-numeric: tabular-nums;
}

.check {
    width: 18px;
    height: 18px;
}

.info {
    width: 14px;
    height: 14px;
}

.badge {
    width: 24px;
    height: 24px;
}

.badge-letter {
    font-family: "Liberation Serif", serif;
    font-size: 14px;
    font-weight: bold;
}

.affiliate {
    color: #7880a8;
}

.scroll-thumb {
    position: absolute;
    top: 48px;
    right: 4px;
    width: 5px;
    height: 68%;
    border-radius: 3px;
    background: #566368;
}

.total {
    margin-bottom: 10px;
    color: #a3adb1;
    font-family: Inter, "Noto Sans CJK SC", sans-serif;
    font-size: 18px;
    font-weight: 300;
    line-height: 28px;
}

.total b {
    font-weight: 700;
}

.total b,
.total span {
    color: #fff;
}

.card-out .total {
    margin-bottom: 14px;
}

.where {
    align-self: flex-start;
    height: 35px;
    margin: 0 0 1px 2px;
    padding: 0 11px;
    border-radius: 5px;
    background: #607a8a;
    font-size: 16px;
    line-height: 32px;
}

.watermark {
    position: absolute;
    bottom: 4px;
    left: calc(50% - 100px);
    width: 0;
    display: flex;
    justify-content: center;
    color: #cfd1d3;
    font-size: 19px;
    font-weight: bold;
    white-space: nowrap;
}
```
